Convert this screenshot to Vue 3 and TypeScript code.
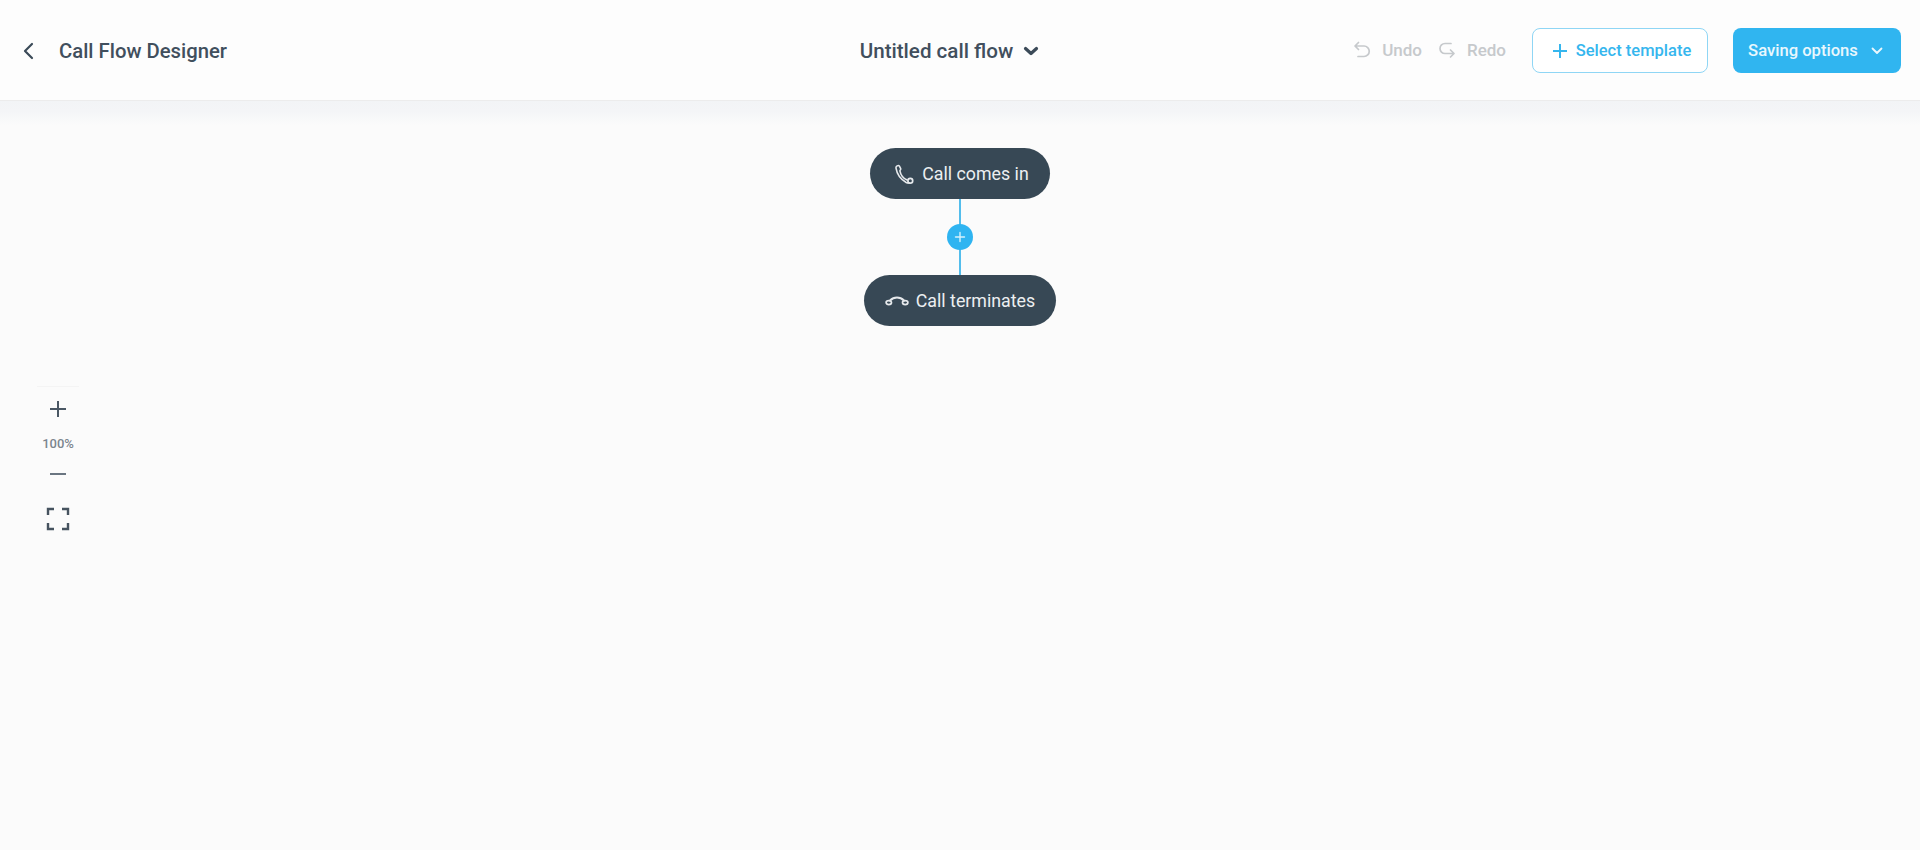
<script setup lang="ts">
const title: string = 'Call Flow Designer'
</script>

<template>
  <div class="page">
    <header class="topbar">
      <div class="left">
        <button class="back" aria-label="Back">
          <svg width="12" height="20" viewBox="0 0 12 20"><path d="M10 3 3 10l7 7" fill="none" stroke="#3b4a58" stroke-width="2.200" stroke-linecap="round" stroke-linejoin="round"/></svg>
        </button>
        <span class="title">{{ title }}</span>
      </div>
      <div class="center">
        <span class="flowname">Untitled call flow</span>
        <svg width="16" height="10" viewBox="0 0 16 10"><path d="M2.500 2.500 8 7.500l5.500-5" fill="none" stroke="#3b4a58" stroke-width="3.200" stroke-linecap="round" stroke-linejoin="round"/></svg>
      </div>
      <div class="right">
        <span class="hist">
          <svg width="18" height="18" viewBox="0 0 18 18"><path d="M5.500 1.500 2 5l3.500 3.500M2.500 5H11a5 5 0 0 1 0 10.500H5" fill="none" stroke="#c6c9cc" stroke-width="1.700" stroke-linecap="round" stroke-linejoin="round"/></svg>
          Undo
        </span>
        <span class="hist redo">
          <svg width="18" height="18" viewBox="0 0 18 18"><path d="M12.500 9 16 12.500 12.500 16M15.500 12.500H7a5 5 0 0 1 0-10h6" fill="none" stroke="#c6c9cc" stroke-width="1.700" stroke-linecap="round" stroke-linejoin="round"/></svg>
          Redo
        </span>
        <button class="btn-outline">
          <svg width="14" height="14" viewBox="0 0 14 14"><path d="M7 .5v13M.5 7h13" stroke="#35b6ee" stroke-width="2" stroke-linecap="round"/></svg>
          Select template
        </button>
        <button class="btn-solid">
          Saving options
          <svg width="12" height="8" viewBox="0 0 12 8"><path d="M1.500 1.500 6 6l4.500-4.500" fill="none" stroke="#eaf7fd" stroke-width="1.800" stroke-linecap="round" stroke-linejoin="round"/></svg>
        </button>
      </div>
    </header>

    <main class="canvas">
      <div class="node">
        <svg class="phone" width="22" height="22" viewBox="0 0 22 22"><path d="M3 5.200c-.6-1.800 2.400-3.600 3.400-2.100l1.300 2.500c.4.900-.7 1.400-.8 2.200.7 3.600 3 7.300 7.200 9.200M3 5.200c.9 5.700 4.400 11 10.200 14.300 1 .5 2.100.6 3.100.5" fill="none" stroke="#e6e9ec" stroke-width="1.600" stroke-linecap="round" stroke-linejoin="round"/><circle cx="17.300" cy="17.800" r="2.400" fill="none" stroke="#e6e9ec" stroke-width="1.700"/></svg>
        Call comes in
      </div>
      <div class="link">
        <span class="add">
          <svg width="12" height="12" viewBox="0 0 12 12"><path d="M6 1.500v9M1.500 6h9" stroke="#d6f1fc" stroke-width="1.400" stroke-linecap="round"/></svg>
        </span>
      </div>
      <div class="node">
        <svg width="24" height="12" viewBox="0 0 24 12"><path d="M5 5.500C9 1.500 15 1.500 19 5.500" fill="none" stroke="#e6e9ec" stroke-width="2" stroke-linecap="round"/><ellipse cx="3.800" cy="7.600" rx="2.700" ry="2" fill="none" stroke="#e6e9ec" stroke-width="1.700"/><ellipse cx="20.200" cy="7.600" rx="2.700" ry="2" fill="none" stroke="#e6e9ec" stroke-width="1.700"/></svg>
        Call terminates
      </div>

      <aside class="zoom">
        <button class="zbtn" aria-label="Zoom in"><svg width="18" height="18" viewBox="0 0 18 18"><path d="M9 1v16M1 9h16" stroke="#4a5764" stroke-width="2"/></svg></button>
        <span class="pct">100%</span>
        <button class="zbtn" aria-label="Zoom out"><svg width="18" height="18" viewBox="0 0 18 18"><path d="M1 9h16" stroke="#6a7581" stroke-width="2"/></svg></button>
        <button class="zbtn fit" aria-label="Fit"><svg width="24" height="24" viewBox="0 0 24 24"><path d="M2 8V2h6M16 2h6v6M22 16v6h-6M8 22H2v-6" fill="none" stroke="#46535f" stroke-width="2.400"/></svg></button>
      </aside>
    </main>
  </div>
</template>

<style scoped>
.page {
  height: 850px;
  display: flex;
  flex-direction: column;
  background: #fbfbfb;
  font-family: Roboto, "Liberation Sans", sans-serif;
  overflow: hidden;
}
.topbar {
  height: 101px;
  flex: none;
  box-sizing: border-box;
  padding: 1px 19px 0 22px;
  display: grid;
  grid-template-columns: 1fr auto 1fr;
  align-items: center;
  background: #fdfdfd;
  border-bottom: 1px solid #ececec;
}
button {
  font-family: inherit;
  background: none;
  border: 0;
  padding: 0;
}
.left { display: flex; align-items: center; gap: 25px; }
.back { display: flex; }
.title { font-size: 20.300px; font-weight: 500; color: #414f5d; }
.center { display: flex; align-items: center; gap: 10px; margin-right: 24px; }
.flowname { font-size: 20.600px; font-weight: 500; color: #414f5d; }
.right { display: flex; align-items: center; justify-content: flex-end; }
.hist { display: flex; align-items: center; gap: 11px; margin-bottom: 2px; font-size: 17px; font-weight: 500; color: #c6c9cc; }
.redo { margin-left: 16px; margin-right: 26px; }
.btn-outline {
  width: 176px;
  height: 45px;
  box-sizing: border-box;
  padding-left: 4px;
  border: 1px solid #8fd6f5;
  border-radius: 8px;
  display: flex;
  align-items: center;
  justify-content: center;
  gap: 9px;
  background: #fff;
  color: #35b6ee;
  font-size: 16.500px;
  font-weight: 500;
}
.btn-solid {
  width: 168px;
  height: 45px;
  box-sizing: border-box;
  padding-right: 3px;
  margin-left: 25px;
  border-radius: 8px;
  display: flex;
  align-items: center;
  justify-content: center;
  gap: 13px;
  background: #30b5f0;
  color: #e9f7fd;
  font-size: 16.600px;
  font-weight: 500;
}
.canvas {
  position: relative;
  flex: 1;
  display: flex;
  flex-direction: column;
  align-items: center;
  padding-top: 47px;
  background: linear-gradient(#f2f4f6 0, #f4f5f7 10px, #fbfbfb 24px);
}
.node {
  height: 51px;
  padding: 0 21px;
  border-radius: 26px;
  display: flex;
  align-items: center;
  gap: 7px;
  background: #374855;
  color: #eceff1;
  font-size: 17.800px;
}
.phone { margin-left: 2px; }
.link {
  position: relative;
  width: 2px;
  height: 76px;
  background: #53bdec;
  display: flex;
  align-items: center;
  justify-content: center;
}
.add {
  flex: none;
  width: 26px;
  height: 26px;
  border-radius: 50%;
  background: #2fb4f1;
  display: flex;
  align-items: center;
  justify-content: center;
}
.zoom {
  position: absolute;
  left: 37px;
  top: 285px;
  width: 42px;
  padding-top: 9px;
  border-top: 1px solid #f4f4f4;
  display: flex;
  flex-direction: column;
  align-items: center;
}
.zbtn { height: 26px; display: flex; align-items: center; }
.pct { font-size: 13px; font-weight: 500; color: #7c858e; margin: 15px 0 10px; line-height: 14px; }
.fit { margin-top: 19px; }
</style>
